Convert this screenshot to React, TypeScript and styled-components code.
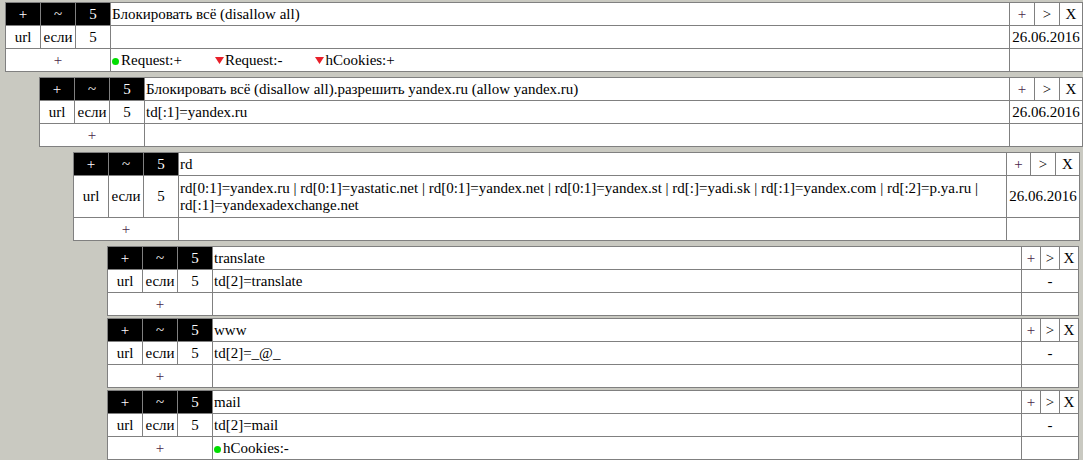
import React from 'react';
import styled, { createGlobalStyle } from 'styled-components';

type Status = { kind: 'on' | 'off'; label: string };

type Rule = {
    id: string;
    title: string;
    cond: string;
    date: string;
    status: Status[];
    btnCols: string;
    multi?: boolean;
    childInsetRight?: number;
    childGap?: number;
    children?: Rule[];
};

const GlobalStyle = createGlobalStyle`
    html, body {
        margin: 0;
        padding: 0;
        background: #c9c9c1;
    }
    body {
        font-family: "Liberation Serif", "Times New Roman", serif;
        font-size: 15px;
        color: #000;
    }
`;

const Page = styled.div`
    padding: 2px 0 0 5px;
`;

const Block = styled.div`
    display: flex;
    flex-direction: column;
`;

const Children = styled.div<{ $right: number }>`
    display: flex;
    flex-direction: column;
    gap: 2px;
    margin: 5px ${(p) => p.$right}px 0 34px;
`;

const Grid = styled.div<{ $cols: string }>`
    display: grid;
    grid-template-columns: 34px 34px 34px 1fr ${(p) => p.$cols};
    grid-auto-rows: minmax(22px, auto);
    gap: 1px;
    background: #808080;
    border: 1px solid #808080;
`;

const Cell = styled.div<{ $span?: number; $align?: 'left' | 'center' }>`
    display: flex;
    align-items: center;
    justify-content: ${(p) => (p.$align === 'left' ? 'flex-start' : 'center')};
    grid-column: span ${(p) => p.$span ?? 1};
    background: #fff;
    line-height: 17px;
    padding: 2px 1px;
    white-space: nowrap;
`;

const HeadCell = styled(Cell)`
    background: #000;
    color: #fff;
`;

const Text = styled(Cell)<{ $multi?: boolean }>`
    justify-content: flex-start;
    white-space: normal;
    padding: ${(p) => (p.$multi ? '4px 1px 3px' : '2px 1px')};
`;

const Link = styled.span<{ $tone?: 'plus' | 'plain' }>`
    color: ${(p) => (p.$tone === 'plus' ? '#4a1f4a' : '#000')};
`;

const StatusList = styled.div`
    display: flex;
    align-items: center;
    gap: 33px;
`;

const StatusItem = styled.span`
    display: inline-flex;
    align-items: center;
`;

const Dot = styled.span`
    display: inline-block;
    width: 7px;
    height: 7px;
    border-radius: 50%;
    background: #00dd00;
    margin: 2px 2px 0 0;
`;

const Tri = () => (
    <svg width='9' height='7' viewBox='0 0 9 7' style={{ margin: '1px 1px 0 0' }}>
        <polygon points='0,0 9,0 4.5,7' fill='#e8202a' />
    </svg>
);

const RuleTable = ({ rule }: { rule: Rule }) => (
    <Block>
        <Grid $cols={rule.btnCols}>
            <HeadCell>+</HeadCell>
            <HeadCell>~</HeadCell>
            <HeadCell>5</HeadCell>
            <Text>{rule.title}</Text>
            <Cell>
                <Link $tone='plus'>+</Link>
            </Cell>
            <Cell>
                <Link>&gt;</Link>
            </Cell>
            <Cell>
                <Link>X</Link>
            </Cell>

            <Cell>url</Cell>
            <Cell>если</Cell>
            <Cell>5</Cell>
            <Text $multi={rule.multi}>{rule.cond}</Text>
            <Cell $span={3}>{rule.date}</Cell>

            <Cell $span={3}>
                <Link $tone='plus'>+</Link>
            </Cell>
            <Text>
                <StatusList>
                    {rule.status.map((s) => (
                        <StatusItem key={s.label + s.kind}>
                            {s.kind === 'on' ? <Dot /> : <Tri />}
                            {s.label}
                        </StatusItem>
                    ))}
                </StatusList>
            </Text>
            <Cell $span={3} />
        </Grid>
        {rule.children && rule.children.length > 0 && (
            <Children $right={rule.childInsetRight ?? 0}>
                {rule.children.map((c) => (
                    <RuleTable key={c.id} rule={c} />
                ))}
            </Children>
        )}
    </Block>
);

const leaf = (id: string, title: string, cond: string, status: Status[] = []): Rule => ({
    id,
    title,
    cond,
    date: '-',
    status,
    btnCols: '18px 18px 18px',
});

const rules: Rule = {
    id: 'root',
    title: 'Блокировать всё (disallow all)',
    cond: '',
    date: '26.06.2016',
    btnCols: '24px 24px 22px',
    status: [
        { kind: 'on', label: 'Request:+' },
        { kind: 'off', label: 'Request:-' },
        { kind: 'off', label: 'hCookies:+' },
    ],
    children: [
        {
            id: 'yandex',
            title: 'Блокировать всё (disallow all).разрешить yandex.ru (allow yandex.ru)',
            cond: 'td[:1]=yandex.ru',
            date: '26.06.2016',
            btnCols: '24px 24px 22px',
            status: [],
            childInsetRight: 3,
            children: [
                {
                    id: 'rd',
                    title: 'rd',
                    cond:
                        'rd[0:1]=yandex.ru | rd[0:1]=yastatic.net | rd[0:1]=yandex.net | rd[0:1]=yandex.st | rd[:]=yadi.sk | rd[:1]=yandex.com | rd[:2]=p.ya.ru | rd[:1]=yandexadexchange.net',
                    date: '26.06.2016',
                    btnCols: '23px 24px 23px',
                    multi: true,
                    status: [],
                    childInsetRight: 1,
                    children: [
                        leaf('translate', 'translate', 'td[2]=translate'),
                        leaf('www', 'www', 'td[2]=_@_'),
                        leaf('mail', 'mail', 'td[2]=mail', [{ kind: 'on', label: 'hCookies:-' }]),
                    ],
                },
            ],
        },
    ],
};

export default function App() {
    return (
        <>
            <GlobalStyle />
            <Page>
                <RuleTable rule={rules} />
            </Page>
        </>
    );
}
